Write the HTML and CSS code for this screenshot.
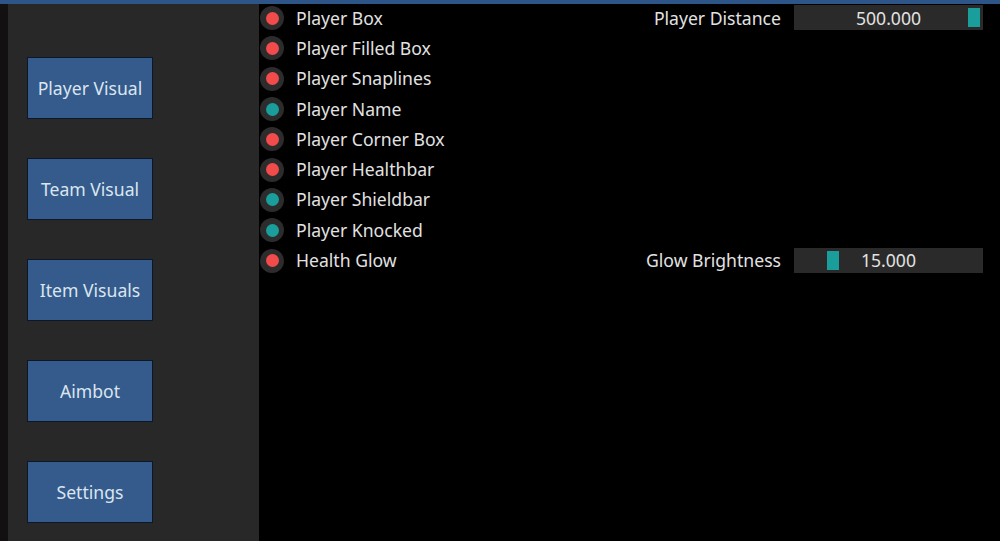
FILE: index.html
```html
<!DOCTYPE html>
<html lang="en">
<head>
  <meta charset="UTF-8">
  <meta name="viewport" content="width=device-width, initial-scale=1.0">
  <title>Menu</title>
  <link rel="stylesheet" href="styles.css">
</head>
<body>
  <div class="title-bar"></div>
  <div class="window">
    <div class="edge"></div>
    <div class="sidebar">
      <button class="tab">Player Visual</button>
      <button class="tab">Team Visual</button>
      <button class="tab">Item Visuals</button>
      <button class="tab">Aimbot</button>
      <button class="tab">Settings</button>
    </div>
    <div class="content">
      <div class="row">
        <div class="toggle"><span class="dot off"></span>Player Box</div>
        <div class="setting">
          <span class="setting-label">Player Distance</span>
          <div class="slider">
            <span class="grab" style="left: 174px"></span>
            <span class="value">500.000</span>
          </div>
        </div>
      </div>
      <div class="row"><div class="toggle"><span class="dot off"></span>Player Filled Box</div></div>
      <div class="row"><div class="toggle"><span class="dot off"></span>Player Snaplines</div></div>
      <div class="row"><div class="toggle"><span class="dot on"></span>Player Name</div></div>
      <div class="row"><div class="toggle"><span class="dot off"></span>Player Corner Box</div></div>
      <div class="row"><div class="toggle"><span class="dot off"></span>Player Healthbar</div></div>
      <div class="row"><div class="toggle"><span class="dot on"></span>Player Shieldbar</div></div>
      <div class="row"><div class="toggle"><span class="dot on"></span>Player Knocked</div></div>
      <div class="row">
        <div class="toggle"><span class="dot off"></span>Health Glow</div>
        <div class="setting">
          <span class="setting-label">Glow Brightness</span>
          <div class="slider">
            <span class="grab" style="left: 33px"></span>
            <span class="value">15.000</span>
          </div>
        </div>
      </div>
    </div>
  </div>
</body>
</html>
```

FILE: styles.css
```css
body {
  margin: 0;
  height: 100vh;
  display: flex;
  flex-direction: column;
  background-color: #000;
  font-family: "Noto Sans", Arial, sans-serif;
  overflow: hidden;
}

.title-bar {
  height: 4px;
  background-color: #2d5587;
}

.window {
  flex: 1;
  display: flex;
}

.edge {
  width: 8px;
  background-color: #121010;
}

.sidebar {
  width: 251px;
  background-color: #282828;
  display: flex;
  flex-direction: column;
  gap: 39px;
  padding: 53px 0 0 19px;
  box-sizing: border-box;
}

.tab {
  width: 126px;
  height: 62px;
  background-color: #345b8b;
  border: 1px solid #0c1828;
  color: #dbe5f0;
  font-family: inherit;
  font-size: 17.6px;
  padding: 0;
  cursor: pointer;
}

.tab:hover {
  background-color: #3d67a0;
}

.content {
  flex: 1;
  display: flex;
  flex-direction: column;
  margin-top: -1.5px;
  color: #e2e2e2;
  font-size: 17.6px;
}

.row {
  height: 30.3px;
  display: flex;
  align-items: center;
  justify-content: space-between;
  padding-right: 17px;
}

.toggle {
  display: flex;
  align-items: center;
  gap: 12px;
  padding-left: 1px;
}

.toggle span {
  margin-top: 1px;
}

.dot {
  width: 24px;
  height: 24px;
  border-radius: 50%;
  background-color: #2c2c2c;
  display: flex;
  align-items: center;
  justify-content: center;
}

.dot::after {
  content: "";
  width: 13px;
  height: 13px;
  border-radius: 50%;
}

.dot.off::after {
  background-color: #f24b4b;
}

.dot.on::after {
  background-color: #1a9e9c;
}

.setting {
  display: flex;
  align-items: center;
  gap: 13px;
}

.slider {
  position: relative;
  width: 189px;
  height: 25px;
  background-color: #2a2a2a;
  display: flex;
  align-items: center;
  justify-content: center;
}

.grab {
  position: absolute;
  top: 3px;
  width: 12px;
  height: 19px;
  background-color: #1a9e9c;
}

.value {
  position: relative;
}
```
